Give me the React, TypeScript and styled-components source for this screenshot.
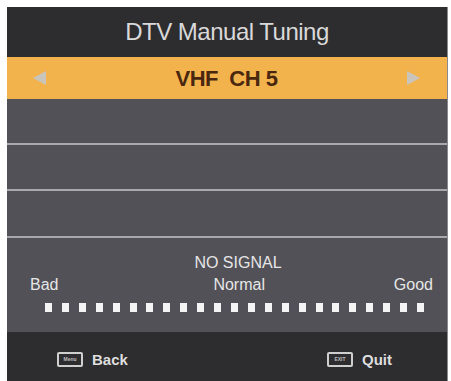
import styled, { createGlobalStyle } from 'styled-components'

const GlobalStyle = createGlobalStyle`
  html, body {
    margin: 0;
    padding: 0;
    background: #ffffff;
  }
  body {
    font-family: "Liberation Sans", Arial, sans-serif;
  }
`

const Page = styled.div`
  padding: 7px 4px 0 7px;
  height: 381px;
  box-sizing: border-box;
  overflow: hidden;
`

const Panel = styled.div`
  width: 440px;
  display: flex;
  flex-direction: column;
  background: #525157;
  border-right: 1px solid #8a8a8c;
`

const TitleBar = styled.div`
  height: 50px;
  background: #2d2d2f;
  display: flex;
  align-items: center;
  justify-content: center;
  color: #d9d9d9;
  font-size: 24px;
  letter-spacing: -0.5px;
`

const ChannelBar = styled.div`
  height: 42px;
  background: #f3b34c;
  display: flex;
  align-items: center;
  justify-content: space-between;
  padding: 0 27px 0 26px;
`

const ChannelText = styled.div`
  color: #4a2810;
  font-size: 22px;
  font-weight: bold;
  letter-spacing: -0.5px;
  white-space: pre;
  padding-top: 2px;
`

const Arrow = styled.div<{ $dir: 'left' | 'right' }>`
  width: 0;
  height: 0;
  border-top: 7px solid transparent;
  border-bottom: 7px solid transparent;
  ${(p) =>
    p.$dir === 'left'
      ? 'border-right: 13px solid #c9c4bc;'
      : 'border-left: 13px solid #c9c4bc;'}
`

const EmptyRow = styled.div<{ $h: number }>`
  height: ${(p) => p.$h}px;
  border-bottom: 2px solid #a9a9ad;
`

const SignalArea = styled.div`
  height: 94px;
  display: flex;
  flex-direction: column;
  padding-top: 16px;
  box-sizing: border-box;
  color: #e6e6e6;
  font-size: 16px;
`

const SignalTitle = styled.div`
  text-align: center;
  padding-left: 22px;
  line-height: 18px;
`

const Scale = styled.div`
  display: flex;
  justify-content: space-between;
  padding: 4px 14px 0 23px;
  line-height: 18px;
`

const NormalLabel = styled.span`
  margin-left: 26px;
`

const Dots = styled.div`
  display: flex;
  justify-content: space-between;
  margin: 9px 23px 0 38px;
`

const Dot = styled.span`
  width: 7px;
  height: 9px;
  background: #f4f4f4;
`

const Footer = styled.div`
  height: 50px;
  background: #2d2d2f;
  display: flex;
  align-items: center;
  justify-content: space-between;
  padding: 4px 55px 0 50px;
  box-sizing: border-box;
`

const KeyHint = styled.div`
  display: flex;
  align-items: center;
  gap: 9px;
  color: #dedede;
  font-size: 15px;
  font-weight: bold;
`

const KeyBox = styled.span`
  width: 22px;
  height: 11px;
  border: 2px solid #cfcfcf;
  border-radius: 2px;
  display: flex;
  align-items: center;
  justify-content: center;
  font-size: 5px;
  font-weight: bold;
  color: #bdbdbd;
  line-height: 1;
`

export default function App() {
  const dots = Array.from({ length: 23 })
  return (
    <Page>
      <GlobalStyle />
      <Panel>
        <TitleBar>DTV Manual Tuning</TitleBar>
        <ChannelBar>
          <Arrow $dir="left" />
          <ChannelText>{'VHF  CH 5'}</ChannelText>
          <Arrow $dir="right" />
        </ChannelBar>
        <EmptyRow $h={44} />
        <EmptyRow $h={44} />
        <EmptyRow $h={45} />
        <SignalArea>
          <SignalTitle>NO SIGNAL</SignalTitle>
          <Scale>
            <span>Bad</span>
            <NormalLabel>Normal</NormalLabel>
            <span>Good</span>
          </Scale>
          <Dots>
            {dots.map((_, i) => (
              <Dot key={i} />
            ))}
          </Dots>
        </SignalArea>
        <Footer>
          <KeyHint>
            <KeyBox>Menu</KeyBox>
            Back
          </KeyHint>
          <KeyHint>
            <KeyBox>EXIT</KeyBox>
            Quit
          </KeyHint>
        </Footer>
      </Panel>
    </Page>
  )
}
